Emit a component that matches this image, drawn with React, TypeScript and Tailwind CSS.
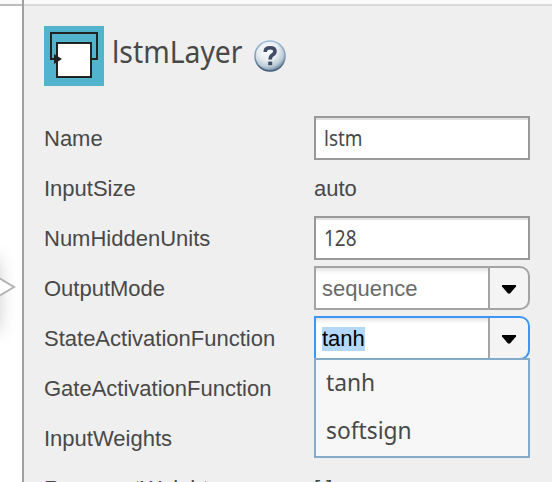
import React from "react";

const humanist = "font-['Noto_Sans','Open_Sans',sans-serif]";

function LayerIcon() {
  return (
    <svg width="60" height="60" viewBox="0 0 60 60" className="block shrink-0">
      <rect width="60" height="60" fill="#51b4cc" />
      <path d="M13 33H7V7H53V33H47" fill="none" stroke="#222" strokeWidth="2" />
      <rect x="13" y="17" width="34" height="34" fill="#fff" stroke="#222" strokeWidth="2" />
      <path d="M10 28L18 33L10 38Z" fill="#222" />
    </svg>
  );
}

function HelpIcon() {
  return (
    <svg width="32" height="32" viewBox="0 0 32 32" className="block shrink-0">
      <defs>
        <linearGradient id="rim" x1="0" y1="0" x2="0" y2="1">
          <stop offset="0" stopColor="#9fc0d8" />
          <stop offset="0.55" stopColor="#8098b2" />
          <stop offset="1" stopColor="#3e5676" />
        </linearGradient>
        <radialGradient id="ball" cx="0.42" cy="0.3" r="0.72">
          <stop offset="0" stopColor="#ffffff" />
          <stop offset="0.5" stopColor="#e7edf1" />
          <stop offset="0.8" stopColor="#bccbd7" />
          <stop offset="1" stopColor="#718ba6" />
        </radialGradient>
      </defs>
      <circle cx="16" cy="16" r="15.8" fill="url(#rim)" />
      <circle cx="16" cy="16" r="14.3" fill="url(#ball)" />
      <path d="M11.3 12V11Q11.5 7.7 16.2 7.7Q21 7.7 21 11.2Q21 13.5 18.6 14.8Q16.2 16 16.2 19.4" fill="none" stroke="#414d65" strokeWidth="3.6" />
      <rect x="14.2" y="21.6" width="4" height="3.6" fill="#414d65" />
    </svg>
  );
}

function Row({ label, children }: { label: string; children?: React.ReactNode }) {
  return (
    <div className="flex h-[50px] items-center">
      <div className="w-[270px] shrink-0 whitespace-nowrap pt-[2px]">{label}</div>
      {children}
    </div>
  );
}

function TextField({ value }: { value: string }) {
  return (
    <div className={`flex h-[44px] w-[216px] items-center border-2 border-[#999] bg-white pb-[3px] pl-[8px] text-[22px] shadow-[inset_0_2px_0_#e2e2e2] ${humanist}`}>
      <span className="origin-left scale-x-[0.86]">{value}</span>
    </div>
  );
}

function Combo({ value, active = false }: { value: string; active?: boolean }) {
  return (
    <div className={`flex h-[44px] w-[216px] overflow-hidden rounded-r-[10px] border-2 bg-[#f4f4f4] ${active ? "border-[#3c96f5]" : "border-[#a4a4a4]"}`}>
      <div className="flex w-[174px] items-center border-r-2 border-[#a4a4a4] bg-white pl-[6px] pt-[2px] shadow-[inset_0_6px_5px_-4px_#ddd]">
        <span className={active ? "bg-[#b4d8fb] leading-[24px] text-black" : "text-[#6a6a6a]"}>{value}</span>
      </div>
      <div className="flex flex-1 items-center justify-center pt-[3px]">
        <svg width="14" height="9" viewBox="0 0 14 9"><path d="M0 0H14V1.5L8 8.5H6L0 1.5Z" fill="#000" /></svg>
      </div>
    </div>
  );
}

export default function App() {
  return (
    <div className="flex h-[482px] w-[552px] flex-col overflow-hidden bg-[#efefef] font-['Liberation_Sans',Arial,sans-serif] text-[22px] leading-[26px] text-[#484848]">
      <div className="flex h-[6px] shrink-0">
        <div className="w-[22px] border-b-2 border-[#bcbcbc] bg-[#fafafa]" />
        <div className="w-[2px] bg-[#a0a0a0]" />
        <div className="flex-1 border-b-2 border-[#d8d8d8] bg-[#fafafa]" />
      </div>
      <div className="flex h-[476px]">
        <div className="relative w-[22px] shrink-0 overflow-hidden bg-white">
          <div className="absolute left-[-24px] top-[256px] h-[66px] w-[20px] shadow-[0_0_18px_3px_#ccc]" />
          <svg width="18" height="26" className="absolute left-0 top-[268px]">
            <path d="M-3 2.8L14 13L-3 23.2Z" fill="#fff" stroke="#b3b3b3" strokeWidth="2" />
          </svg>
        </div>
        <div className="w-[2px] shrink-0 bg-[#a0a0a0]" />
        <div className="flex-1 pl-[20px] pt-[20px]">
          <div className="flex h-[87px] items-start">
            <LayerIcon />
            <h1 className={`ml-[8px] mt-[6px] w-[132px] origin-left scale-x-[0.945] whitespace-nowrap text-[30px] leading-[40px] ${humanist}`}>lstmLayer</h1>
            <div className="ml-[10px] mt-[14px]"><HelpIcon /></div>
          </div>
          <Row label="Name"><TextField value="lstm" /></Row>
          <Row label="InputSize"><span className="pt-[2px]">auto</span></Row>
          <Row label="NumHiddenUnits"><TextField value="128" /></Row>
          <Row label="OutputMode"><Combo value="sequence" /></Row>
          <Row label="StateActivationFunction">
            <div className="relative">
              <Combo value="tanh" active />
              <div className={`absolute left-0 top-[42px] z-10 h-[100px] w-[216px] border-2 border-[#86aaca] bg-[#f7f7f7] text-[24px] ${humanist}`}>
                <div className="flex h-[48px] items-center pb-[5px] pl-[10px]"><span className="origin-left scale-x-[0.95]">tanh</span></div>
                <div className="flex h-[48px] items-center pb-[5px] pl-[10px]"><span className="origin-left scale-x-[0.95]">softsign</span></div>
              </div>
            </div>
          </Row>
          <Row label="GateActivationFunction" />
          <Row label="InputWeights" />
          <Row label="RecurrentWeights"><span className="pt-[2px]">[ ]</span></Row>
        </div>
      </div>
    </div>
  );
}
